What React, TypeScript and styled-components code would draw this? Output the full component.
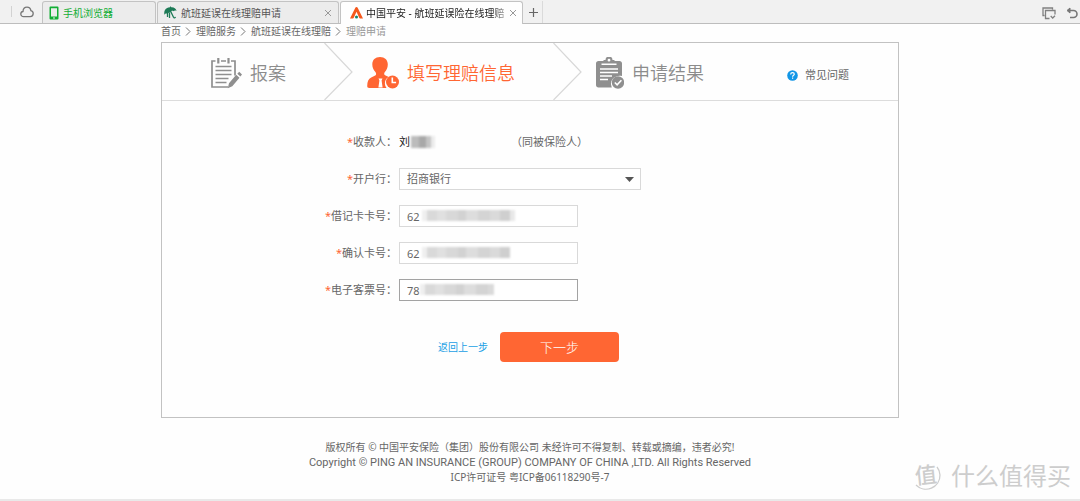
import React from 'react';
import styled, { createGlobalStyle, css } from 'styled-components';

const GlobalStyle = createGlobalStyle`
  * { box-sizing: border-box; }
  body {
    margin: 0;
    background: #fefefe;
    color: #666;
    font-family: "Noto Sans", "Noto Sans CJK SC", sans-serif;
    font-size: 11px;
    line-height: 16px;
  }
  a { text-decoration: none; color: inherit; }
  button, input, select { font: inherit; color: inherit; }
`;

const Page = styled.div`
  position: relative;
  display: flex;
  flex-direction: column;
  min-height: 100vh;
  border-bottom: 2px solid #e9e9e9;
`;

const TabBar = styled.header`
  display: flex;
  align-items: flex-end;
  height: 24px;
  background: #f1f1f1;
  border-bottom: 1px solid #bdbdbd;
  font-size: 10px;
`;

const BarStart = styled.div`
  display: flex;
  align-items: center;
  justify-content: flex-end;
  flex: 0 0 42px;
  height: 23px;
  padding-right: 8px;
  gap: 8px;
`;

const BarDivider = styled.span`
  width: 1px;
  height: 11px;
  background: #d2d2d2;
`;

const Tab = styled.div<{ $width: number; $active?: boolean; $accent?: boolean }>`
  display: flex;
  align-items: center;
  flex: 0 1 ${(p) => p.$width}px;
  min-width: 0;
  height: 22px;
  margin-right: 1px;
  padding: 0 6px;
  gap: 4px;
  border: 1px solid #c3c3c3;
  border-bottom: 0;
  border-radius: 3px 3px 0 0;
  background: #ececec;
  color: ${(p) => (p.$accent ? '#12ae35' : '#555')};
  ${(p) =>
    p.$active &&
    css`
      height: 23px;
      margin-bottom: -1px;
      padding: 0 5px 0 9px;
      gap: 3px;
      background: #fefefe;
      color: #222;
    `}
`;

const TabTitle = styled.span<{ $faded?: boolean }>`
  flex: 1;
  min-width: 0;
  overflow: hidden;
  white-space: nowrap;
  ${(p) =>
    p.$faded &&
    css`
      mask-image: linear-gradient(to right, #000 90%, rgba(0, 0, 0, 0.3));
    `}
`;

const IconButton = styled.button`
  display: flex;
  align-items: center;
  justify-content: center;
  padding: 0;
  border: 0;
  background: none;
  color: #777;
`;

const NewTab = styled(IconButton)`
  width: 19px;
  height: 22px;
  border-right: 1px solid #dadada;
`;

const BarEnd = styled.div`
  display: flex;
  align-items: center;
  gap: 10px;
  height: 23px;
  margin-left: auto;
  padding: 3px 2px 0 0;
`;

const Content = styled.main`
  width: 100%;
  max-width: 758px;
  margin: 0 auto;
  padding-right: 20px;
`;

const Breadcrumb = styled.nav`
  display: flex;
  align-items: center;
  height: 18px;
  padding-bottom: 4px;
  font-size: 10px;
  gap: 4px;
  white-space: nowrap;
`;

const Current = styled.span`
  color: #999;
`;

const Card = styled.section`
  min-height: 376px;
  border: 1px solid #c2c2c2;
`;

const Steps = styled.div`
  display: flex;
  align-items: center;
  height: 58px;
  border-bottom: 1px solid #dcdcdc;
`;

const Step = styled.div<{ $start: number; $active?: boolean }>`
  display: flex;
  align-items: center;
  gap: 8px;
  padding: 2px 38px 0 ${(p) => p.$start}px;
  color: ${(p) => (p.$active ? '#ff6633' : '#8c8c8c')};
  font-size: 18px;
  font-weight: 350;
  line-height: 24px;
  white-space: nowrap;
`;

const HelpLink = styled.a`
  display: flex;
  align-items: center;
  gap: 7px;
  margin-left: 45px;
  padding-top: 7px;
  font-size: 11px;
  white-space: nowrap;
`;

const Form = styled.form`
  display: flex;
  flex-direction: column;
  gap: 15px;
  padding-top: 30px;
`;

const Row = styled.div`
  display: grid;
  grid-template-columns: 235px 1fr;
  align-items: center;
  column-gap: 2px;
  min-height: 22px;
`;

const Label = styled.label`
  text-align: right;
  white-space: nowrap;
`;

const Required = styled.span`
  color: #ff6633;
`;

const Payee = styled.div`
  position: relative;
  display: flex;
  color: #222;
`;

const PayeeName = styled.output`
  width: 112px;
`;

const PayeeNote = styled.span`
  color: #666;
`;

const Field = styled.div<{ $width: number }>`
  position: relative;
  width: ${(p) => p.$width}px;
`;

const control = css`
  display: block;
  width: 100%;
  height: 22px;
  padding: 0 7px;
  border: 1px solid #d9d9d9;
  border-radius: 0;
  background: #fff;
  outline: 0;
`;

const Input = styled.input<{ $focused?: boolean }>`
  ${control}
  border-color: ${(p) => (p.$focused ? '#a3a3a3' : '#d9d9d9')};
`;

const Select = styled.select`
  ${control}
  appearance: none;
`;

const Caret = styled.svg`
  position: absolute;
  top: 9px;
  right: 7px;
  pointer-events: none;
`;

const Mosaic = styled.span<{ $left: number; $width: number; $dark?: boolean }>`
  position: absolute;
  top: ${(p) => (p.$dark ? 2 : 5)}px;
  left: ${(p) => p.$left}px;
  width: ${(p) => p.$width}px;
  height: ${(p) => (p.$dark ? 12 : 11)}px;
  background: ${(p) =>
    p.$dark
      ? 'linear-gradient(to right, #bcbcbc 0 8px, #a8a8a8 8px 15px, #c4c4c4 15px 20px, #ececec 20px)'
      : 'linear-gradient(to right, #efefef 0 5px, #d9d9d9 5px 15px, #e0e0e0 15px 24px, #d8d8d8 24px 36px, #d2d2d2 36px 44px, #dddddd 44px 56px, #d4d4d4 56px 68px, #dadada 68px 78px, #cfcfcf 78px 88px, #e8e8e8 88px)'};
  filter: blur(1px);
`;

const Actions = styled.div`
  display: flex;
  align-items: center;
  gap: 12px;
  padding: 16px 0 0 276px;
`;

const BackLink = styled.a`
  color: #1a9fe5;
  font-size: 10px;
`;

const NextButton = styled.button`
  width: 119px;
  height: 30px;
  border: 0;
  border-radius: 4px;
  background: #ff6633;
  color: #fff;
  font-size: 13px;
  font-weight: 300;
`;

const Footer = styled.footer`
  padding-top: 22px;
  text-align: center;
  font-size: 10px;
  line-height: 15px;
`;

const FooterLine = styled.p<{ $latin?: boolean }>`
  margin: 0;
  ${(p) =>
    p.$latin &&
    css`
      font-family: Roboto, sans-serif;
      font-size: 11px;
    `}
`;

const Watermark = styled.div`
  position: absolute;
  right: 9px;
  bottom: 7px;
  display: flex;
  align-items: center;
  gap: 8px;
  color: #cdcdcd;
  font-size: 24px;
  line-height: 32px;
  font-weight: 400;
  white-space: nowrap;
`;

const Seal = styled.svg`
  overflow: visible;
  font-size: 22px;
  font-weight: 500;
`;

const Close = () => (
  <svg width="8" height="8" viewBox="0 0 8 8" fill="none" stroke="#999" strokeWidth="1">
    <path d="M1 1l6 6M7 1L1 7" />
  </svg>
);

const Chevron = () => (
  <svg width="29" height="57" viewBox="0 0 29 57" fill="none" stroke="#d8d8d8" strokeWidth="1.2">
    <path d="M.5 0L28 29 .5 57" />
  </svg>
);

const Separator = () => (
  <svg width="7" height="9" viewBox="0 0 7 9" fill="none" stroke="#777" strokeWidth="1">
    <path d="M1 .5l4 4-4 4" />
  </svg>
);

const CloudIcon = () => (
  <svg width="14" height="12" viewBox="0 0 14 12" fill="none" stroke="#777" strokeWidth="1.3">
    <path d="M3.6 10.6C2 10.6.8 9.500.8 8c0-1.300.9-2.300 2.200-2.500C3.100 3 4.700 1.200 7 1.200c2.200 0 3.600 1.500 3.900 3.500 1.400.3 2.300 1.500 2.300 2.900 0 1.700-1.300 3-3 3z" />
  </svg>
);

const PhoneIcon = () => (
  <svg width="10" height="14" viewBox="0 0 10 14">
    <path fill="#12ae35" fillRule="evenodd" d="M1.500.5h7a1 1 0 0 1 1 1v11a1 1 0 0 1-1 1h-7a1 1 0 0 1-1-1v-11a1 1 0 0 1 1-1zM2 2.200v8.300h6V2.200zM4 11.500v1h2v-1z" />
  </svg>
);

const UmbrellaIcon = () => (
  <svg width="13" height="13" viewBox="0 0 13 13" fill="none">
    <path fill="#1d7a56" d="M.4 8.800C-.4 4.500 2 1.400 5.400 1.500L6.600.2l.6 1.100c2.500-.3 4.600 1 5.400 3.600-1.300-.6-2.300-.5-3 .3-.8-.6-1.500-.6-2.200-.1L5.700 6.400c-1 0-1.600.5-1.900 1.500C2.600 7.200 1.200 7.300.4 8.800z" />
    <path stroke="#1d7a56" strokeWidth="1.300" d="M6 4l3.500 7.300c.5.900 1.700.7 1.900-.4M3.500 6v5M5.500 6.500V12" />
  </svg>
);

const PingAnIcon = () => (
  <svg width="13" height="12" viewBox="0 0 13 12">
    <path fill="#f4581c" d="M6.500 0c.6 0 1 .3 1.300.9L13 11.500h-2.400c-.8 0-1.200-.3-1.500-1L6.500 4.700 3.900 10.500c-.3.700-.7 1-1.500 1H0L5.200.9C5.500.3 5.900 0 6.500 0z" />
    <circle cx="6.500" cy="10" r="1.500" fill="#14806a" />
  </svg>
);

const WindowsIcon = () => (
  <svg width="14" height="13" viewBox="0 0 14 13" fill="none" stroke="#808080" strokeWidth="1.300">
    <path d="M2.500 8.500H1V1h9.500v1.500M7.500 11.500H3.500V3.500h9.500v4" />
    <path d="M8.700 9l2 2 2.300-2.200" />
  </svg>
);

const UndoIcon = () => (
  <svg width="12" height="12" viewBox="0 0 12 12" fill="none" stroke="#777" strokeWidth="1.600">
    <path fill="#777" strokeWidth="1" d="M4 1v5L1 3.500z" />
    <path d="M2 3.500h5.500a3.400 3.400 0 0 1 0 7H4" />
  </svg>
);

const NotepadIcon = () => (
  <svg width="32" height="32" viewBox="0 0 32 32" fill="none" stroke="#8f8f8f">
    <path strokeWidth="1.700" d="M5.500 4H2v26h16M11 4h5M21 4h4v14.500" />
    <path strokeWidth="2.200" d="M8.300 1v5.500M18.500 1v5.500" />
    <path strokeWidth="1.700" d="M5.500 9.500h16M5.500 13.500h16M5.500 17.500h16M5.500 21.500h13M5.500 25.500h11" />
    <path fill="#8f8f8f" stroke="none" d="M29.200 14.800l2.800 2.600-1.600 2-3.100-2.700zM26.200 17.800l3.300 2.900-7.200 8.500-4.500 2.100 1.200-5z" />
  </svg>
);

const PersonClockIcon = () => (
  <svg width="32" height="32" viewBox="0 0 32 32">
    <path fill="#ff6633" d="M13 0c4.700 0 7.800 3 7.800 7.400 0 3.200-1.300 5.900-2.900 7.500-.9 1-1 2.600.2 3.300l3.700 1.800c-2.500 1.300-3.900 3.400-3.900 6.200 0 1.800.6 3.400 1.700 4.800H2.200c-1.400 0-2-.8-2-2 0-4.500 1.300-7 4-8.400l4-2c1.200-.7 1.200-2.500.2-3.600-1.700-1.900-3.100-4.400-3.100-7.600C5.300 3 8.300 0 13 0z" />
    <path fill="#fff" d="M11.500 21.500h4l-.9 2 1 7h-4.200l1-7z" />
    <circle cx="25.500" cy="25" r="6.500" fill="#ff6633" />
    <path fill="none" stroke="#fff" strokeWidth="1.600" d="M25.300 20.500v5h3.800" />
  </svg>
);

const ClipboardIcon = () => (
  <svg width="28" height="32" viewBox="0 0 28 32">
    <path fill="#8f8f8f" fillRule="evenodd" d="M2.500 4h5V3h2a3.500 3.500 0 0 1 7 0h2v1h5C25 4 26 5 26 6.500V19c-6-1.500-11.500 3-11 8.500l.8 3H2.500C1 30.500 0 29.500 0 28V6.500C0 5 1 4 2.500 4zM13 1.800a1.400 1.400 0 1 0 0 2.800 1.400 1.400 0 0 0 0-2.800z" />
    <path stroke="#fff" strokeWidth="1.500" d="M5.500 7.200h15M4 12h18M4 15.500h18M4 19h12M4 22.500h8" />
    <circle cx="22" cy="25.500" r="6.200" fill="#8f8f8f" />
    <path fill="none" stroke="#fff" strokeWidth="1.600" d="M18.800 25.500l2.300 2.300 4.300-4.600" />
  </svg>
);

const HelpIcon = () => (
  <svg width="11" height="11" viewBox="0 0 11 11">
    <circle cx="5.500" cy="5.500" r="5.300" fill="#1296e6" />
    <path fill="none" stroke="#fff" strokeWidth="1.200" d="M3.700 4.400c0-1.100.8-1.700 1.800-1.700s1.800.6 1.800 1.500c0 1.100-1.700 1.200-1.700 2.500M5.600 7.600v1.200" />
  </svg>
);

interface CardField {
  id: string;
  label: string;
  value: string;
  left: number;
  width: number;
  focused?: boolean;
}

const fields: CardField[] = [
  { id: 'card', label: '借记卡卡号', value: '62', left: 23, width: 93 },
  { id: 'confirm', label: '确认卡号', value: '62', left: 23, width: 88 },
  { id: 'ticket', label: '电子客票号', value: '78', left: 21, width: 74, focused: true },
];

const Star = () => <Required>*</Required>;

export default function App() {
  return (
    <Page>
      <GlobalStyle />
      <TabBar>
        <BarStart>
          <BarDivider />
          <CloudIcon />
        </BarStart>
        <Tab $width={114} $accent>
          <PhoneIcon />
          <TabTitle>手机浏览器</TabTitle>
        </Tab>
        <Tab $width={182}>
          <UmbrellaIcon />
          <TabTitle>航班延误在线理赔申请</TabTitle>
          <IconButton aria-label="关闭"><Close /></IconButton>
        </Tab>
        <Tab $width={183} $active>
          <PingAnIcon />
          <TabTitle $faded>中国平安 - 航班延误险在线理赔</TabTitle>
          <IconButton aria-label="关闭"><Close /></IconButton>
        </Tab>
        <NewTab aria-label="新标签">
          <svg width="9" height="9" viewBox="0 0 9 9" stroke="#666" strokeWidth="1.200">
            <path d="M4.500 0v9M0 4.500h9" />
          </svg>
        </NewTab>
        <BarEnd>
          <IconButton aria-label="窗口"><WindowsIcon /></IconButton>
          <IconButton aria-label="撤销"><UndoIcon /></IconButton>
        </BarEnd>
      </TabBar>

      <Content>
        <Breadcrumb>
          <a href="#home">首页</a>
          <Separator />
          <a href="#service">理赔服务</a>
          <Separator />
          <a href="#delay">航班延误在线理赔</a>
          <Separator />
          <Current>理赔申请</Current>
        </Breadcrumb>

        <Card>
          <Steps>
            <Step $start={48}>
              <NotepadIcon />
              报案
            </Step>
            <Chevron />
            <Step $start={14} $active>
              <PersonClockIcon />
              填写理赔信息
            </Step>
            <Chevron />
            <Step $start={14}>
              <ClipboardIcon />
              申请结果
            </Step>
            <HelpLink href="#faq">
              <HelpIcon />
              常见问题
            </HelpLink>
          </Steps>

          <Form onSubmit={(e) => e.preventDefault()}>
            <Row>
              <Label htmlFor="payee"><Star />收款人：</Label>
              <Payee>
                <PayeeName id="payee">刘</PayeeName>
                <Mosaic $left={12} $width={24} $dark />
                <PayeeNote>（同被保险人）</PayeeNote>
              </Payee>
            </Row>
            <Row>
              <Label htmlFor="bank"><Star />开户行：</Label>
              <Field $width={242}>
                <Select id="bank">
                  <option>招商银行</option>
                </Select>
                <Caret width="9" height="5" viewBox="0 0 9 5">
                  <path d="M0 0h9L4.500 5z" fill="#555" />
                </Caret>
              </Field>
            </Row>
            {fields.map((f) => (
              <Row key={f.id}>
                <Label htmlFor={f.id}><Star />{f.label}：</Label>
                <Field $width={179}>
                  <Input id={f.id} defaultValue={f.value} $focused={f.focused} />
                  <Mosaic $left={f.left} $width={f.width} />
                </Field>
              </Row>
            ))}
            <Actions>
              <BackLink href="#back">返回上一步</BackLink>
              <NextButton type="submit">下一步</NextButton>
            </Actions>
          </Form>
        </Card>

        <Footer>
          <FooterLine>版权所有 © 中国平安保险（集团）股份有限公司 未经许可不得复制、转载或摘编，违者必究!</FooterLine>
          <FooterLine $latin>Copyright © PING AN INSURANCE (GROUP) COMPANY OF CHINA ,LTD. All Rights Reserved</FooterLine>
          <FooterLine>ICP许可证号 粤ICP备06118290号-7</FooterLine>
        </Footer>
      </Content>

      <Watermark>
        <Seal width="32" height="32" viewBox="0 0 32 32">
          <path fill="none" stroke="#cdcdcd" strokeWidth="1.300" d="M5 25a14 14 0 0 0 24-10 13 13 0 0 0-3-8" />
          <text x="4" y="23" fill="#cdcdcd" transform="rotate(-6 16 16)">值</text>
        </Seal>
        什么值得买
      </Watermark>
    </Page>
  );
}
